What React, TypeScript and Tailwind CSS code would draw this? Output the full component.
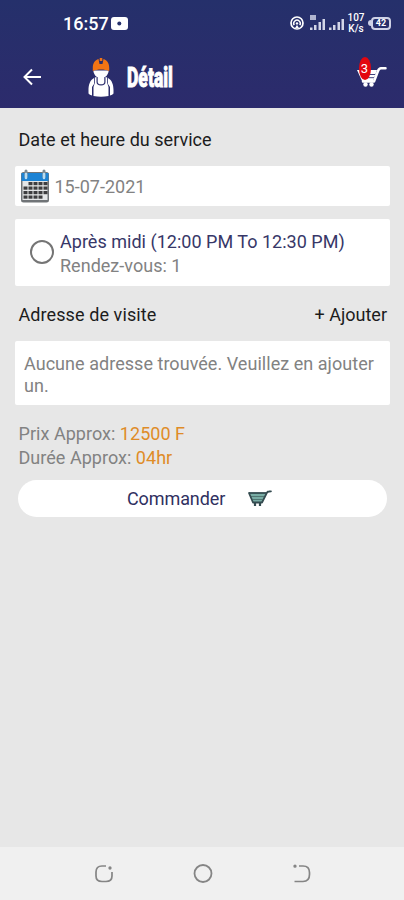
import type { ReactNode } from 'react';

function StatusBar() {
  return (
    <div className="flex h-[46px] items-center pl-[63px] pr-[13px] text-white">
      <span className="w-[48px] whitespace-nowrap pt-[2px] text-[18px] font-medium leading-none">16:57</span>
      <svg width="17" height="13" viewBox="0 0 17 13">
        <rect width="17" height="13" rx="3" fill="#fff" />
        <circle cx="8.3" cy="6.5" r="2" fill="#25306b" />
      </svg>
      <svg className="ml-auto" width="14" height="14" viewBox="0 0 14 14" fill="none" stroke="#fff">
        <circle cx="7" cy="7" r="6" strokeWidth="1.7" />
        <path d="M4.2 9.2A3.3 3.3 0 1 1 9.8 9.2" strokeWidth="1.5" />
        <circle cx="7" cy="7.4" r="1.2" fill="#fff" stroke="none" />
        <path d="M5 12l2-3 2 3z" fill="#fff" stroke="none" />
      </svg>
      <svg className="ml-[5px]" width="37" height="16" viewBox="0 0 37 16" fill="#d3d6e8">
        <path d="M1 0h6v5H1z" opacity=".8" />
        <path d="M1 12.5h2.500V15H1zM5 10h2.500v5H5zM9.500 7H12v8H9.500zM13.500 4H16v11h-2.500zM20 12.500h2.500V15H20zM24 10h2.500v5H24zM28.500 7H31v8h-2.500zM32.500 4H35v11h-2.500z" />
      </svg>
      <div className="ml-px w-[18px] text-center text-[10px] font-medium leading-[11px]">
        <div>107</div>
        <div>K/s</div>
      </div>
      <div className="ml-[3px] flex items-center">
        <span className="h-[6px] w-[3px] rounded-l-sm bg-[#cfd2e6]" />
        <span className="flex h-[13px] w-[20px] items-center justify-center rounded-[4px] border-2 border-[#cfd2e6] text-[9px] font-bold leading-none">
          42
        </span>
      </div>
    </div>
  );
}

function WorkerIcon() {
  return (
    <svg width="26" height="40" viewBox="0 0 26 40">
      <path d="M5.500 13.500v1.500q1.500 4.500 4.500 5.500v3h6v-3q3-1 4.500-5.500v-1.500z" fill="#fff" />
      <path
        d="M4.800 14v-3.500C4.800 6 7 3.300 10.500 2l1 5h3l1-5c3.500 1.300 5.700 4 5.700 8.500V14c-5-2-11.400-2-16.400 0z"
        fill="#f27414"
      />
      <path d="M11.700 1h2.600v3h-2.600z" fill="#f27414" />
      {/* arms */}
      <path d="M6 21C2 23 .5 28 .5 33v3.500q1 1.500 3.500 2V30l2-3z" fill="#fff" />
      <path d="M20 21c4 2 5.500 7 5.500 12v3.500q-1 1.500-3.500 2V30l-2-3z" fill="#fff" />
      {/* overalls */}
      <path d="M6.800 20.500v5.500L5.500 30v9q7.500 1.500 15 0v-9l-1.300-4v-5.500l-1.700-.5v5c0 2-1.500 3.500-4.500 3.500S8.500 27 8.500 25v-5z" fill="#fff" />
      <path d="M9.700 20.500h6.600V25c0 1.500-1.200 2.300-3.300 2.300S9.700 26.500 9.700 25z" fill="#fff" />
    </svg>
  );
}

function CartIcon() {
  return (
    <svg width="30" height="22" viewBox="0 0 30 22" fill="none" stroke="#fff">
      <path d="M0 4h20l-4 11H5z" fill="#fff" stroke="none" />
      <path d="M4 8.500h14M5 11.700h12" stroke="#2b2c6c" strokeWidth=".9" />
      <path d="M28.500 2.300h-4.500Q22 2.300 21 5l-4 10.500H6" strokeWidth="2.500" strokeLinecap="round" strokeLinejoin="round" />
      <circle cx="8.500" cy="18.500" r="2.200" fill="#fff" stroke="none" />
      <circle cx="14.500" cy="18.500" r="2.200" fill="#fff" stroke="none" />
    </svg>
  );
}

function SmallCartIcon() {
  return (
    <svg width="25" height="18" viewBox="0 0 25 18" fill="none">
      <path d="M1.500 3H18l-4 9.500H5z" fill="#79ada5" />
      <path d="M1 3h17" stroke="#344b50" strokeWidth="1.800" />
      <path d="M3 6.500h13M4.500 9.500h10" stroke="#466966" strokeWidth=".8" />
      <path
        d="M1 3 5 12.500h9L19 2.500q.7-1 2-1l2-.2"
        stroke="#344b50"
        strokeWidth="1.800"
        strokeLinecap="round"
        strokeLinejoin="round"
      />
      <path d="M7 13v3M12 13v3" stroke="#344b50" strokeWidth="2.200" />
    </svg>
  );
}

function CalendarIcon() {
  const rows = [13, 17.5, 22, 26.5];
  const cols = [3.5, 8.5, 13.5, 18.5, 23.5];
  return (
    <svg width="30" height="34" viewBox="0 0 30 34">
      <rect x="1" y="3" width="28" height="30.5" rx="2.5" fill="#707477" />
      <rect x="2.5" y="12" width="25" height="19" fill="#e4e6e7" />
      <rect x="1.5" y="4" width="27" height="8" fill="#1c83d4" />
      {rows.map((y, r) =>
        cols.map((x, c) =>
          (r === 0 && c === 0) || (r === 3 && c === 4) ? null : (
            <rect key={`${y}-${x}`} x={x} y={y} width="4" height="3.2" fill="#3d3d3f" />
          ),
        ),
      )}
      <path d="M6 2v6M24 2v6" stroke="#7d8b93" strokeWidth="3" strokeLinecap="round" />
      <path d="M6 5v4M24 5v4" stroke="#b9dcf0" strokeWidth="2.5" strokeLinecap="round" />
    </svg>
  );
}

function Header() {
  return (
    <header className="h-[108px] bg-linear-to-b from-[#25306b] to-[#2c2b6c]">
      <StatusBar />
      <div className="flex h-[62px] items-center pl-[23px] pr-[17px]">
        <svg width="20" height="18" viewBox="0 0 20 18" fill="none" stroke="#fff" strokeWidth="2">
          <path d="M18 9H2M9 1.500 1.500 9 9 16.500" />
        </svg>
        <div className="ml-[45px]">
          <WorkerIcon />
        </div>
        <h1 className="ml-[12.5px] w-[50px] origin-left scale-x-[0.65] whitespace-nowrap pt-[2px] text-[27px] font-black leading-none text-white [-webkit-text-stroke:0.8px_white]">
          Détail
        </h1>
        <div className="relative ml-auto h-[22px] w-[30px]">
          <CartIcon />
          <span className="absolute -top-[9px] left-[1.5px] flex h-[23px] w-[12px] items-center justify-center rounded-[50%] bg-[#e3060f] text-[13px] leading-none text-white">
            3
          </span>
        </div>
      </div>
    </header>
  );
}

function Card({ className, children }: { className: string; children: ReactNode }) {
  return <div className={`mx-[14.5px] rounded-[2px] bg-white ${className}`}>{children}</div>;
}

function NavBar() {
  return (
    <nav className="flex h-[53px] items-center justify-between bg-[#f0f0f0] pl-[93.5px] pr-[92.5px]">
      <svg width="20" height="20" viewBox="0 0 20 20" fill="none" stroke="#858585" strokeWidth="1.7">
        <path d="M12 2H8Q2 2 2 8v4q0 5.500 6 5.500h4q6 0 6-5.500V8" />
        <circle cx="16" cy="4" r=".8" fill="#858585" />
      </svg>
      <svg width="20" height="20" viewBox="0 0 20 20" fill="none" stroke="#858585" strokeWidth="1.8">
        <circle cx="10" cy="9.5" r="8.5" />
      </svg>
      <svg width="20" height="20" viewBox="0 0 20 20" fill="none" stroke="#858585" strokeWidth="1.7">
        <path d="M7 2h4q6.500 0 6.500 6.500v2q0 7-6.500 7H2.500" />
        <circle cx="3" cy="2.2" r=".8" fill="#858585" />
      </svg>
    </nav>
  );
}

export default function App() {
  return (
    <div className="flex h-[900px] w-[404px] flex-col overflow-hidden bg-[#e7e7e7] font-['Roboto',sans-serif] text-[18px] text-[#828282]">
      <Header />

      <main className="flex-1">
        <h2 className="flex h-[58px] items-center px-[18.5px] pt-[4px] tracking-[0.03px] text-[#1c1c1c]">
          Date et heure du service
        </h2>

        <Card className="flex h-10 items-center pl-[5px]">
          <CalendarIcon />
          <span className="ml-[5px]">15-07-2021</span>
        </Card>

        <Card className="mt-[13px] flex h-[67px] items-center pl-[15px]">
          <span className="mb-px h-[24px] w-[24px] shrink-0 rounded-full border-2 border-[#757575]" />
          <div className="ml-[6.5px] whitespace-nowrap pt-[2px] leading-6">
            <div className="tracking-[0.02px] text-[#373768]">Après midi (12:00 PM To 12:30 PM)</div>
            <div className="tracking-[0.02px]">Rendez-vous: 1</div>
          </div>
        </Card>

        <div className="flex h-[55px] items-center justify-between pl-[18.5px] pr-[17px] pt-[2px] text-[#1c1c1c]">
          <h2 className="tracking-[0.09px]">Adresse de visite</h2>
          <button>+ Ajouter</button>
        </div>

        <Card className="h-[64px] pl-[9.5px] pr-[8px] pt-[12px] leading-[21.5px]">
          <p className="tracking-[0.04px]">Aucune adresse trouvée. Veuillez en ajouter un.</p>
        </Card>

        <div className="px-[18.5px] pt-[17px] leading-6 tracking-[0.03px]">
          <div>
            Prix Approx: <span className="text-[#df8c27]">12500 F</span>
          </div>
          <div>
            Durée Approx: <span className="text-[#df8c27]">04hr</span>
          </div>
        </div>

        <button className="ml-[18px] mt-[10px] flex h-[37px] w-[369px] items-center rounded-full bg-white pl-[109px] text-[#30305f]">
          <span className="w-[121px] text-left tracking-[-0.1px]">Commander</span>
          <SmallCartIcon />
        </button>
      </main>

      <NavBar />
    </div>
  );
}
